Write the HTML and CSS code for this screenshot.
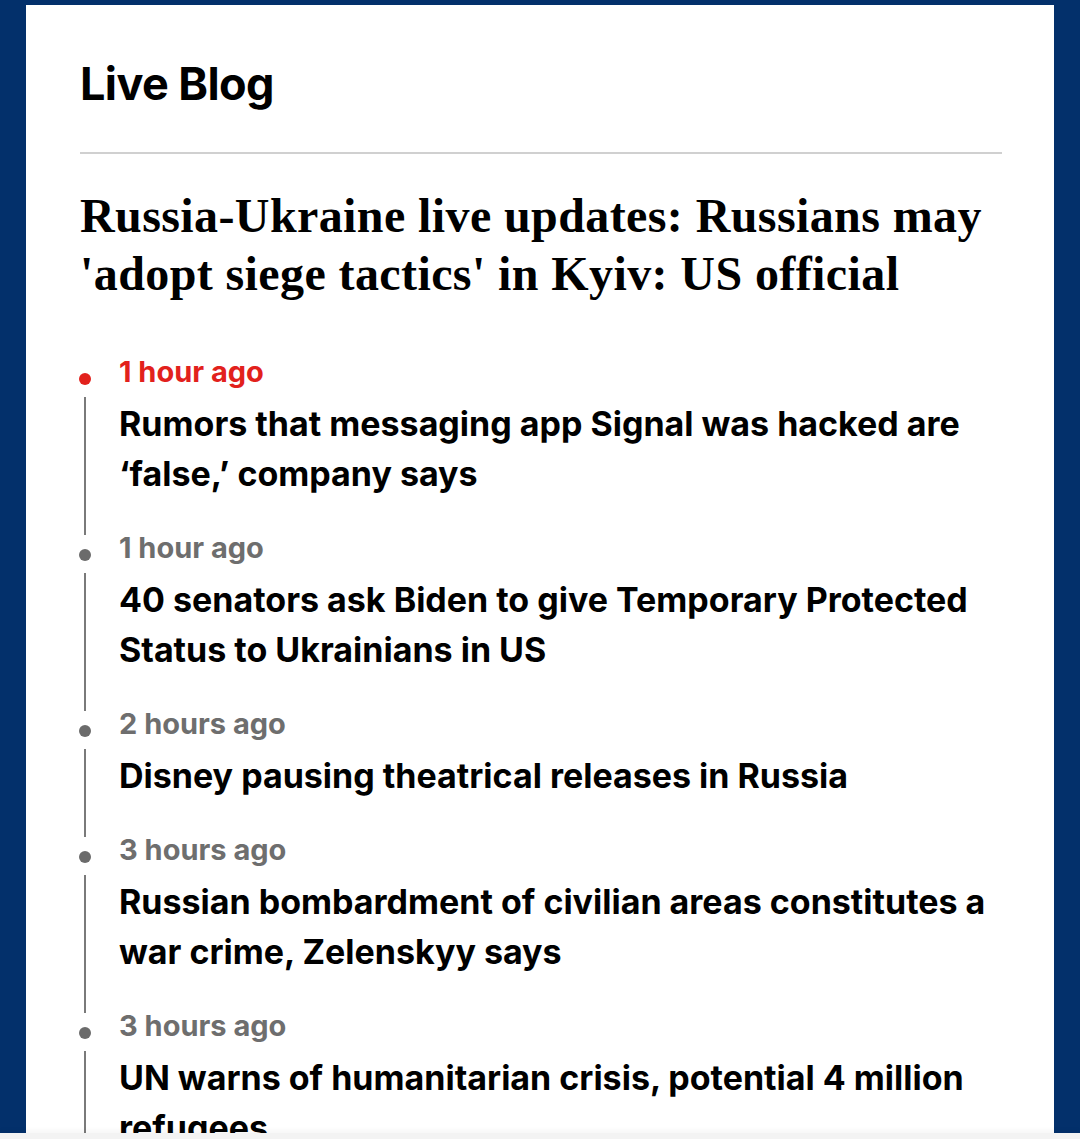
FILE: index.html
```html
<!DOCTYPE html>
<html lang="en">
<head>
<meta charset="utf-8">
<title>Live Blog</title>
<link rel="stylesheet" href="styles.css">
</head>
<body>
<main class="card">
  <h2 class="section-title">Live Blog</h2>
  <hr class="divider">
  <h1 class="headline">Russia-Ukraine live updates: Russians may 'adopt siege tactics' in Kyiv: US official</h1>
  <ol class="timeline">
    <li class="item item--latest">
      <div class="rail"><span class="dot"></span><span class="line"></span></div>
      <div class="body">
        <div class="time">1 hour ago</div>
        <div class="title">Rumors that messaging app Signal was hacked are ‘false,’ company says</div>
      </div>
    </li>
    <li class="item">
      <div class="rail"><span class="dot"></span><span class="line"></span></div>
      <div class="body">
        <div class="time">1 hour ago</div>
        <div class="title">40 senators ask Biden to give Temporary Protected Status to Ukrainians in US</div>
      </div>
    </li>
    <li class="item">
      <div class="rail"><span class="dot"></span><span class="line"></span></div>
      <div class="body">
        <div class="time">2 hours ago</div>
        <div class="title">Disney pausing theatrical releases in Russia</div>
      </div>
    </li>
    <li class="item">
      <div class="rail"><span class="dot"></span><span class="line"></span></div>
      <div class="body">
        <div class="time">3 hours ago</div>
        <div class="title">Russian bombardment of civilian areas constitutes a war crime, Zelenskyy says</div>
      </div>
    </li>
    <li class="item">
      <div class="rail"><span class="dot"></span><span class="line"></span></div>
      <div class="body">
        <div class="time">3 hours ago</div>
        <div class="title">UN warns of humanitarian crisis, potential 4 million refugees</div>
      </div>
    </li>
  </ol>
</main>
<div class="bottom-bar"></div>
</body>
</html>
```

FILE: styles.css
```css
html, body {
  margin: 0;
  padding: 0;
}
body {
  background: #03306b;
  padding: 5px 26px 0 26px;
  font-family: Inter, Lato, "Liberation Sans", sans-serif;
  color: #000;
  overflow: hidden;
  height: 1139px;
  box-sizing: border-box;
}
.card {
  background: #fff;
  padding: 51px 52px 40px 54px;
  min-height: 1200px;
  box-sizing: border-box;
}
.section-title {
  margin: 0;
  font-family: Inter, Lato, "Liberation Sans", sans-serif;
  font-weight: 700;
  font-size: 45px;
  line-height: 56px;
  letter-spacing: -0.6px;
}
.divider {
  border: 0;
  height: 2px;
  background: #d0d0d0;
  margin: 40px 0 0 0;
}
.headline {
  margin: 33px 0 0 0;
  font-family: "Liberation Serif", "Times New Roman", serif;
  font-weight: 700;
  font-size: 48px;
  line-height: 58px;
  letter-spacing: 0.4px;
}
.timeline {
  list-style: none;
  margin: 51px 0 0 0;
  padding: 0;
}
.item {
  display: grid;
  grid-template-columns: 40px 1fr;
  margin-left: -1px;
}
.rail {
  display: flex;
  flex-direction: column;
  align-items: center;
  width: 12px;
}
.dot {
  width: 12px;
  height: 12px;
  border-radius: 50%;
  background: #6b6b6b;
  margin-top: 19px;
  flex: none;
}
.line {
  flex: 1;
  width: 2px;
  background: #7a7a7a;
  margin-top: 12px;
  margin-bottom: -5px;
}
.item--latest .dot {
  background: #e2211c;
}
.body {
  padding-bottom: 31.5px;
}
.time {
  font-size: 29px;
  line-height: 36px;
  font-weight: 700;
  color: #6e6e6e;
}
.item--latest .time {
  color: #e2211c;
}
.title {
  margin-top: 8.5px;
  font-size: 34px;
  line-height: 50px;
  font-weight: 700;
  color: #000;
}
.bottom-bar {
  position: fixed;
  left: 0;
  right: 0;
  bottom: 0;
  height: 6px;
  background: #f3f3f3;
  box-shadow: 0 -3px 5px rgba(0, 0, 0, 0.04);
}
```
